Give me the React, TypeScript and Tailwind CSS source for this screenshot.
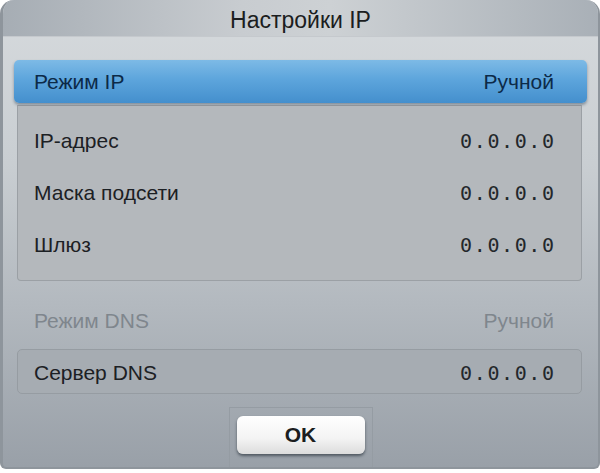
import React from "react";

const sans = { fontFamily: '"Liberation Sans", Arial, sans-serif' };
const mono = { fontFamily: '"DejaVu Sans Mono", "Liberation Mono", monospace' };

function Row({ label, value, className = "" }: { label: string; value: string; className?: string }) {
  return (
    <div className={`flex items-center justify-between pr-[27px] ${className}`}>
      <span className="text-[21px] text-[#1c2024]" style={sans}>{label}</span>
      <span className="text-[20px] tracking-[1.6px] text-[#23272b] -mr-[1.6px]" style={mono}>{value}</span>
    </div>
  );
}

export default function App() {
  return (
    <div className="w-[600px] h-[473px] bg-white">
      <div className="h-[469px] rounded-t-[14px] rounded-b-[6px] overflow-hidden flex flex-col border-l-[3px] border-r-[2px] border-b-[2px] border-[#8e959c] bg-[linear-gradient(to_bottom,#d6dadd_0%,#c9ced2_35%,#b3b9bf_65%,#99a0a8_100%)]">
        <div className="h-[37px] shrink-0 flex items-center justify-center bg-[linear-gradient(to_right,#a6adb4_0%,#c8ccd0_40%,#cdd1d4_55%,#a9b0b7_100%)] border-b border-[#c5c9cd]">
          <span className="text-[23px] text-[#1b1d20] mt-[4px]" style={sans}>Настройки IP</span>
        </div>
        <div className="flex-1 flex flex-col px-[11px] pt-[23px]">
          <div className="h-[43px] rounded-[5px] flex items-center justify-between pl-[20px] pr-[33px] bg-[linear-gradient(to_bottom,#7dbae6_0%,#5da5dc_45%,#448fcd_100%)] shadow-[0_2px_3px_rgba(40,60,80,0.45)]">
            <span className="text-[21px] text-[#0c2a48]" style={sans}>Режим IP</span>
            <span className="text-[21px] text-[#0c2a48]" style={sans}>Ручной</span>
          </div>
          <div className="mx-[3px] mr-[5px] mt-[2px] h-[176px] bg-[#b4b8bc] border border-[#9ba0a5] border-t-[#8f949a] rounded-b-[4px] flex flex-col pt-[9px]">
            <Row label="IP-адрес" value="0.0.0.0" className="h-[52px] pl-[16px]" />
            <Row label="Маска подсети" value="0.0.0.0" className="h-[52px] pl-[16px]" />
            <Row label="Шлюз" value="0.0.0.0" className="h-[52px] pl-[16px]" />
          </div>
          <div className="h-[68px] flex items-center justify-between pl-[20px] pr-[33px] pt-[14px] pb-[2px]">
            <span className="text-[21px] text-[#7f868d]" style={sans}>Режим DNS</span>
            <span className="text-[21px] text-[#7f868d]" style={sans}>Ручной</span>
          </div>
          <div className="h-[45px] mx-[3px] mr-[5px] rounded-[5px] bg-[#a6acb2] border border-[#969ca2] flex items-center pt-[2px]">
            <Row label="Сервер DNS" value="0.0.0.0" className="w-full pl-[16px]" />
          </div>
          <div className="flex-1 flex justify-center">
            <div className="mt-[13px] w-[144px] border-x border-t border-[#959ca3] flex justify-center pt-[8px]">
              <div className="w-[128px] h-[38px] rounded-[6px] flex items-center justify-center bg-[linear-gradient(to_bottom,#ffffff_0%,#f3f3f3_60%,#dcdcdc_100%)] shadow-[0_2px_3px_rgba(30,40,50,0.6)]">
                <span className="text-[21px] font-bold text-[#1b1d20]" style={sans}>OK</span>
              </div>
            </div>
          </div>
        </div>
      </div>
    </div>
  );
}
